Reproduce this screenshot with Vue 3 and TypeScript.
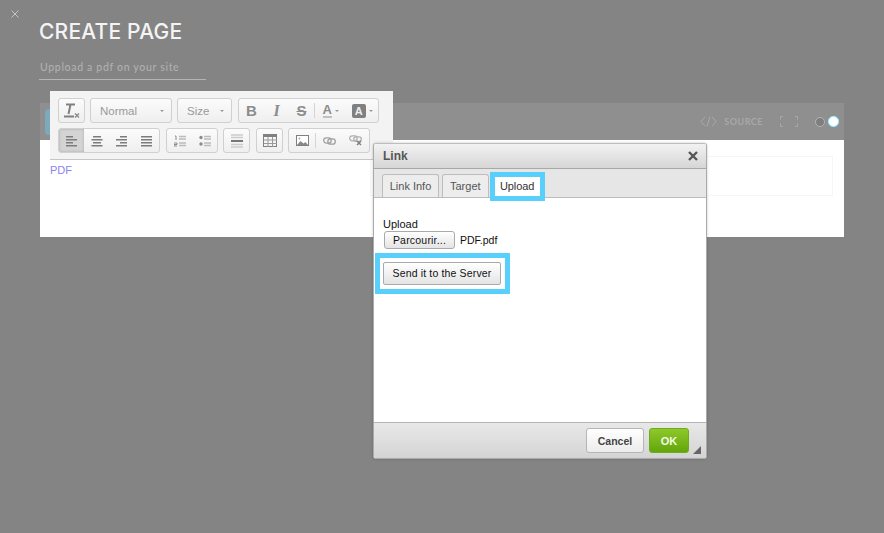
<script setup lang="ts">
const alignIcons = [
  [[1, 2, 7], [1, 5, 11], [1, 8, 7], [1, 11, 11]],
  [[3, 2, 8], [1.500, 5, 11], [3, 8, 8], [1.500, 11, 11]],
  [[5, 2, 7], [1, 5, 11], [5, 8, 7], [1, 11, 11]],
  [[1, 2, 11], [1, 5, 11], [1, 8, 11], [1, 11, 11]],
];
</script>

<template>
  <div class="page">
    <svg class="close" width="8" height="8" viewBox="0 0 8 8"><path d="M.5.5l7 7M7.500.5l-7 7" stroke="#c4c4c4" fill="none" /></svg>

    <header class="head">
      <h1>CREATE PAGE</h1>
      <div class="subject">Uppload a pdf on your site</div>
    </header>

    <section class="editor">
      <div class="bar">
        <span class="blue"></span>
        <div class="bar-right">
          <svg class="code" width="17" height="11" viewBox="0 0 17 11"><path d="M5 1L.8 5.500 5 10M12 1l4.200 4.500L12 10M10 .5L7 10.500" fill="none" stroke="#a8a8a8" /></svg>
          <span class="source">SOURCE</span>
          <svg class="full" width="18" height="11" viewBox="0 0 18 11"><path d="M3 .5H.5v3M.5 7.500v3H3M15 .5h2.500v3M17.500 7.500v3H15" fill="none" stroke="#a8a8a8" /></svg>
          <span class="dot"></span>
          <span class="dot on"></span>
        </div>
      </div>
      <div class="content">
        <a class="pdf">PDF</a>
        <div class="inner-box"></div>
      </div>
    </section>

    <div class="toolbar">
      <div class="row">
        <div class="grp w-t">
          <span class="btn">
            <svg width="18" height="17" viewBox="0 0 18 17"><path d="M3 2.500h9M7.500 2.500L5.500 12M1 14.500h10" stroke="#808080" stroke-width="2" fill="none" /><path d="M12 11.500l4 4M16 11.500l-4 4" stroke="#8c8c8c" stroke-width="1.400" fill="none" /></svg>
          </span>
        </div>
        <div class="grp combo w-normal"><span>Normal</span><i class="caret"></i></div>
        <div class="grp combo w-size"><span>Size</span><i class="caret"></i></div>
        <div class="grp w-bold">
          <span class="btn fixed glyph b">B</span>
          <span class="btn fixed glyph i">I</span>
          <span class="btn fixed glyph s">S</span>
          <span class="sep"></span>
          <span class="btn">
            <span class="txt-a">A</span><i class="caret small"></i>
          </span>
          <span class="btn">
            <span class="bg-a">A</span><i class="caret small"></i>
          </span>
        </div>
      </div>
      <div class="row">
        <div class="grp w-align">
          <span v-for="(lines, n) in alignIcons" :key="n" class="btn" :class="{ active: n === 0 }">
            <svg width="13" height="14" viewBox="0 0 13 14">
              <rect v-for="(l, k) in lines" :key="k" :x="l[0]" :y="l[1]" :width="l[2]" height="1.500" fill="#7c7c7c" />
            </svg>
          </span>
        </div>
        <div class="grp w-list gap-l">
          <span class="btn">
            <svg width="12" height="14" viewBox="0 0 12 14"><path d="M1 2h1v4M0 9h3v1.500H0V12h3" stroke="#8c8c8c" fill="none" stroke-width="1" /><path d="M5 2.500h7M5 5h7M5 9h7M5 11.500h7" stroke="#bbb" stroke-width="1.500" /></svg>
          </span>
          <span class="btn">
            <svg width="12" height="14" viewBox="0 0 12 14"><circle cx="2" cy="3.500" r="1.700" fill="#8c8c8c" /><circle cx="2" cy="10" r="1.700" fill="#8c8c8c" /><path d="M5 2.500h7M5 5h7M5 9h7M5 11.500h7" stroke="#bbb" stroke-width="1.500" /></svg>
          </span>
        </div>
        <div class="grp w-t">
          <span class="btn">
            <svg width="12" height="14" viewBox="0 0 12 14"><path d="M0 1h12M0 3.500h12M0 10.500h12M0 13h12" stroke="#ccc" stroke-width="1.500" /><path d="M0 7h12" stroke="#777" stroke-width="2" /></svg>
          </span>
        </div>
        <div class="grp w-t gap-l">
          <span class="btn">
            <svg width="14" height="13" viewBox="0 0 14 13"><rect x=".5" y=".5" width="13" height="12" fill="none" stroke="#808080" /><rect x="0" y="0" width="14" height="3" fill="#808080" /><path d="M5 3v10M9.500 3v10M1 6h13M1 9.500h13" stroke="#999" /></svg>
          </span>
        </div>
        <div class="grp w-img">
          <span class="btn">
            <svg width="13" height="11" viewBox="0 0 13 11"><rect x=".5" y=".5" width="12" height="10" fill="#fff" stroke="#808080" /><path d="M1 10l3.500-4 3 2.500 2-1.500 2.500 3z" fill="#888" /><circle cx="3.500" cy="3.500" r="1" fill="#aaa" /></svg>
          </span>
          <span class="sep"></span>
          <span class="btn">
            <svg width="13" height="8" viewBox="0 0 13 8"><rect x=".7" y=".8" width="7.500" height="5.400" rx="2.700" fill="none" stroke="#a0a0a0" stroke-width="1.300" /><rect x="4.800" y="1.800" width="7.500" height="5.400" rx="2.700" fill="none" stroke="#a0a0a0" stroke-width="1.300" /></svg>
          </span>
          <span class="btn">
            <svg width="14" height="11" viewBox="0 0 14 11"><rect x=".7" y=".8" width="7.500" height="5" rx="2.500" fill="none" stroke="#b0b0b0" stroke-width="1.300" /><rect x="4.800" y="1.800" width="7.500" height="4.500" rx="2.200" fill="none" stroke="#b0b0b0" stroke-width="1.300" /><path d="M8 6l4 4M12 6l-4 4" stroke="#808080" stroke-width="1.500" /></svg>
          </span>
        </div>
      </div>
    </div>

    <div class="dialog">
      <div class="dlg-title">
        <span>Link</span>
        <svg width="10" height="10" viewBox="0 0 10 10"><path d="M1 1l8 8M9 1l-8 8" stroke="#555" stroke-width="2.400" fill="none" /></svg>
      </div>
      <div class="tabs">
        <span class="tab first">Link Info</span>
        <span class="tab">Target</span>
        <span class="tab current">Upload</span>
      </div>
      <div class="dlg-body">
        <div class="label">Upload</div>
        <div class="file"><span class="file-btn">Parcourir...</span><span>PDF.pdf</span></div>
        <div class="send-ring"><span class="send">Send it to the Server</span></div>
      </div>
      <div class="dlg-foot">
        <span class="cancel">Cancel</span>
        <span class="ok">OK</span>
        <i class="grip"></i>
      </div>
    </div>
  </div>
</template>

<style>
html, body { margin: 0; }
</style>

<style scoped>
.page {
  position: relative;
  width: 884px;
  height: 533px;
  overflow: hidden;
  background: #848484;
  font-family: "Liberation Sans", Arial, sans-serif;
}
.close { position: absolute; left: 11px; top: 10px; }
.head { padding: 20px 0 0 39px; height: 103px; box-sizing: border-box; }
h1 {
  margin: 0;
  font: 500 21px/24px Inter, sans-serif;
  letter-spacing: .2px;
  color: #f4f4f4;
}
.subject {
  width: 167px;
  height: 25px;
  margin-top: 11px;
  box-sizing: border-box;
  padding: 5px 0 0 1px;
  border-bottom: 1px solid #b4b4b4;
  font: 500 10.500px/14px Lato, sans-serif;
  letter-spacing: .68px;
  color: #b0b0b0;
}
.editor { margin-left: 40px; width: 804px; height: 134px; display: flex; flex-direction: column; }
.bar {
  height: 37px;
  flex: none;
  background: #8f8f8f;
  display: flex;
  align-items: center;
  justify-content: space-between;
  padding-left: 5px;
  box-sizing: border-box;
}
.blue { width: 30px; height: 26px; border-radius: 4px; background: #7ea9bd; }
.bar-right { display: flex; align-items: center; padding-right: 5px; color: #a8a8a8; }
.code { margin-right: 7px; }
.source { font: 700 9px/12px Lato, sans-serif; letter-spacing: .5px; margin-right: 17px; }
.full { margin-right: 17px; }
.dot { box-sizing: border-box; width: 10px; height: 10px; border: 1px solid #b4b4b4; border-radius: 50%; background: #7e7e7e; }
.dot.on { width: 11px; height: 11px; background: #fff; border-color: #a8e4f8; margin-left: 3px; box-shadow: 0 0 1px #5ed4ff; }
.content { flex: 1; background: #fff; position: relative; }
.pdf {
  position: absolute;
  left: 10px;
  top: 23px;
  font: 11px/14px "Liberation Sans", sans-serif;
  color: #8885ee;
}
.inner-box { position: absolute; left: 330px; top: 16px; width: 461px; height: 38px; border: 1px solid #f6f6f6; }

.toolbar {
  position: absolute;
  left: 50px;
  top: 91px;
  width: 343px;
  height: 69px;
  box-sizing: border-box;
  padding: 7px 0 0 8px;
  background: #f3f3f3;
  border-bottom: 1px solid #c6c6c6;
  display: flex;
  flex-direction: column;
  gap: 5px;
  color: #8a8a8a;
}
.row { display: flex; gap: 5px; height: 25px; }
.grp {
  box-sizing: border-box;
  height: 25px;
  display: flex;
  align-items: stretch;
  border: 1px solid #d0d0d0;
  border-radius: 3px;
  background: linear-gradient(#fbfbfb, #efefef);
  overflow: hidden;
}
.gap-l { margin-left: 1px; }
.w-t { width: 27px; }
.w-normal { width: 82px; }
.w-size { width: 55px; }
.w-bold { width: 141px; margin-left: 1px; }
.w-align { width: 102px; }
.w-list { width: 52px; }
.w-img { width: 82px; }
.btn { flex: 1; display: flex; align-items: center; justify-content: center; }
.btn.fixed { flex: none; width: 25px; }
.btn.active { background: #d4d4d4; box-shadow: inset 0 0 3px #aaa; }
.sep { flex: none; width: 1px; margin: 4px 0; background: #d4d4d4; }
.combo { align-items: center; justify-content: space-between; padding: 0 7px 0 9px; font-size: 11.500px; color: #999; }
.caret { display: block; width: 0; height: 0; border: 2px solid transparent; border-top: 2.500px solid #999; border-bottom: 0; }
.caret.small { margin-left: 3px; }
.glyph { font-size: 15px; }
.b { font-weight: 700; color: #8c8c8c; }
.i { font-style: italic; font-weight: 700; font-family: "Liberation Serif", serif; color: #8c8c8c; font-size: 16px; }
.s { font-weight: 700; text-decoration: line-through; color: #8c8c8c; }
.txt-a { font-size: 13px; font-weight: 700; color: #8c8c8c; border-bottom: 2px solid #c0c0c0; line-height: 13px; }
.bg-a {
  box-sizing: border-box;
  width: 14px;
  height: 14px;
  border-radius: 2px;
  background: #808080;
  color: #eee;
  font-size: 11px;
  font-weight: 700;
  line-height: 14px;
  text-align: center;
}

.dialog {
  position: absolute;
  left: 373px;
  top: 143px;
  width: 334px;
  height: 316px;
  box-sizing: border-box;
  display: flex;
  flex-direction: column;
  background: #fff;
  border: 1px solid #aaa;
  border-top-color: #bdbdbd;
  border-radius: 3px;
  overflow: hidden;
  box-shadow: 0 0 3px rgba(0, 0, 0, .2);
}
.dlg-title {
  height: 24px;
  flex: none;
  display: flex;
  align-items: center;
  justify-content: space-between;
  padding: 0 8px 0 9px;
  background: linear-gradient(#f2f2f2, #d6d6d6);
  border-bottom: 1px solid #a8a8a8;
  font-size: 12px;
  font-weight: 700;
  color: #555;
}
.tabs {
  height: 28px;
  flex: none;
  display: flex;
  align-items: flex-end;
  gap: 3px;
  padding-left: 8px;
  background: #e6e6e6;
  border-bottom: 1px solid #bcbcbc;
}
.tab {
  box-sizing: border-box;
  height: 23px;
  padding: 0 7px;
  display: flex;
  align-items: center;
  border: 1px solid #bdbdbd;
  border-bottom: 0;
  border-radius: 3px 3px 0 0;
  background: #ededed;
  font-size: 11px;
  color: #555;
}
.tab.first { width: 57px; padding: 0; justify-content: center; }
.tab.current {
  position: relative;
  z-index: 1;
  width: 55px;
  height: 29px;
  margin-left: -2px;
  margin-bottom: -4px;
  padding: 0 0 2px;
  justify-content: center;
  background: #fff;
  color: #333;
  border: 5px solid #59d0fb;
  border-radius: 0;
  letter-spacing: -.1px;
}
.dlg-body { flex: 1; padding: 20px 9px 0; font-size: 11px; color: #111; position: relative; }
.label { line-height: 13px; }
.file { display: flex; align-items: center; gap: 5px; font-size: 10.500px; }
.file-btn {
  box-sizing: border-box;
  width: 71px;
  height: 18px;
  margin-left: 1px;
  border: 1px solid #aaa;
  border-radius: 3px;
  background: linear-gradient(#fff, #e4e4e4);
  text-align: center;
  line-height: 16px;
  letter-spacing: .2px;
}
.send-ring {
  box-sizing: border-box;
  width: 135px;
  height: 41px;
  margin: 4px 0 0 -8px;
  padding-left: 3px;
  border: 5px solid #59d0fb;
  display: flex;
  align-items: center;
}
.send {
  box-sizing: border-box;
  width: 118px;
  height: 23px;
  border: 1px solid #aaa;
  border-radius: 2px;
  background: linear-gradient(#fff, #e4e4e4);
  text-align: center;
  line-height: 21px;
  font-size: 10.500px;
  letter-spacing: .15px;
}
.dlg-foot {
  height: 35px;
  flex: none;
  display: flex;
  justify-content: flex-end;
  align-items: center;
  gap: 5px;
  padding-right: 17px;
  position: relative;
  background: linear-gradient(#e8e8e8, #d4d4d4);
  border-top: 1px solid #b4b4b4;
}
.cancel, .ok {
  box-sizing: border-box;
  height: 25px;
  border-radius: 3px;
  display: flex;
  align-items: center;
  justify-content: center;
  font-size: 10.500px;
  font-weight: 700;
}
.cancel { width: 58px; background: linear-gradient(#fff, #ececec); border: 1px solid #b6b6b6; color: #444; }
.ok { width: 40px; background: linear-gradient(#8fc82a, #62a60a); border: 1px solid #6fab1e; color: #f4f9e8; font-size: 11px; }
.grip {
  position: absolute;
  right: 5px;
  bottom: 4px;
  width: 0;
  height: 0;
  border-style: solid;
  border-width: 0 0 8px 8px;
  border-color: transparent transparent #666 transparent;
}
</style>
